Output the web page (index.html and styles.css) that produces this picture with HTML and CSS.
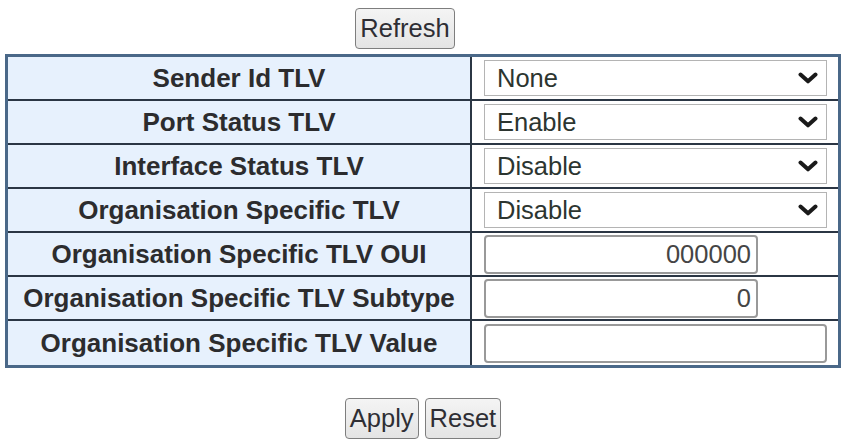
FILE: index.html
```html
<!DOCTYPE html>
<html>
<head>
<meta charset="utf-8">
<link rel="stylesheet" href="styles.css">
</head>
<body>
<div class="topbar">
  <button class="btn">Refresh</button>
</div>
<div class="grid">
  <div class="label">Sender Id TLV</div>
  <div class="value">
    <div class="selwrap">
      <select class="sel"><option>None</option></select>
      <svg class="chev" viewBox="0 0 20 12" width="20" height="12"><polyline points="2.5,2.5 10,9.3 17.5,2.5" fill="none" stroke="#1a1a1a" stroke-width="4" stroke-linecap="round" stroke-linejoin="round"/></svg>
    </div>
  </div>
  <div class="label">Port Status TLV</div>
  <div class="value">
    <div class="selwrap">
      <select class="sel"><option>Enable</option></select>
      <svg class="chev" viewBox="0 0 20 12" width="20" height="12"><polyline points="2.5,2.5 10,9.3 17.5,2.5" fill="none" stroke="#1a1a1a" stroke-width="4" stroke-linecap="round" stroke-linejoin="round"/></svg>
    </div>
  </div>
  <div class="label">Interface Status TLV</div>
  <div class="value">
    <div class="selwrap">
      <select class="sel"><option>Disable</option></select>
      <svg class="chev" viewBox="0 0 20 12" width="20" height="12"><polyline points="2.5,2.5 10,9.3 17.5,2.5" fill="none" stroke="#1a1a1a" stroke-width="4" stroke-linecap="round" stroke-linejoin="round"/></svg>
    </div>
  </div>
  <div class="label">Organisation Specific TLV</div>
  <div class="value">
    <div class="selwrap">
      <select class="sel"><option>Disable</option></select>
      <svg class="chev" viewBox="0 0 20 12" width="20" height="12"><polyline points="2.5,2.5 10,9.3 17.5,2.5" fill="none" stroke="#1a1a1a" stroke-width="4" stroke-linecap="round" stroke-linejoin="round"/></svg>
    </div>
  </div>
  <div class="label">Organisation Specific TLV OUI</div>
  <div class="value"><input class="txt short" type="text" value="000000"></div>
  <div class="label">Organisation Specific TLV Subtype</div>
  <div class="value"><input class="txt short" type="text" value="0"></div>
  <div class="label last">Organisation Specific TLV Value</div>
  <div class="value last"><input class="txt long" type="text" value=""></div>
</div>
<div class="actions">
  <button class="btn">Apply</button>
  <button class="btn">Reset</button>
</div>
</body>
</html>
```

FILE: styles.css
```css
* { box-sizing: border-box; }
html, body { margin: 0; padding: 0; background: #ffffff; }
body {
  font-family: "Liberation Sans", Arial, sans-serif;
  color: #333333;
  width: 846px;
  height: 445px;
  overflow: hidden;
}
.topbar {
  display: flex;
  justify-content: center;
  padding-top: 8px;
  padding-right: 36px;
  height: 54px;
}
.btn {
  font-family: "Liberation Sans", Arial, sans-serif;
  font-size: 25.5px;
  color: #2e2e34;
  background: linear-gradient(#f4f4f4, #e4e4e4);
  border: 1.5px solid #7e7e7e;
  border-radius: 4px;
  height: 41px;
  padding: 0 4px;
  margin: 0;
  line-height: 1;
}
.grid {
  margin-left: 5px;
  width: 836px;
  border: 3px solid #4a6888;
  display: grid;
  grid-template-columns: 464px 366px;
}
.label {
  height: 44px;
  background: #e7f1fd;
  border-right: 2px solid #2b3644;
  border-bottom: 2px solid #2b3644;
  display: flex;
  align-items: center;
  justify-content: center;
  font-weight: bold;
  font-size: 26px;
  color: #2c2c2e;
  white-space: nowrap;
}
.value {
  height: 44px;
  border-bottom: 2px solid #2b3644;
  display: flex;
  align-items: center;
  padding-left: 12px;
  background: #ffffff;
}
.label.last, .value.last { border-bottom: none; }
.selwrap {
  position: relative;
  width: 343px;
  height: 36px;
}
.sel {
  appearance: none;
  -webkit-appearance: none;
  width: 343px;
  height: 36px;
  border: 1.5px solid #b4b4b4;
  border-radius: 0;
  background: #ffffff;
  font-family: "Liberation Sans", Arial, sans-serif;
  font-size: 25.5px;
  color: #2c3530;
  padding: 0 0 0 12px;
  margin: 0;
}
.chev {
  position: absolute;
  right: 9px;
  top: 12px;
  pointer-events: none;
}
.txt {
  height: 39px;
  border: 2px solid #999999;
  border-radius: 4px;
  background: #ffffff;
  font-family: "Liberation Sans", Arial, sans-serif;
  font-size: 25.5px;
  color: #454545;
  padding: 0 5px;
  margin: 0;
  text-align: right;
}
.txt.short { width: 274px; }
.txt.long { width: 343px; }
.actions {
  display: flex;
  justify-content: center;
  gap: 6px;
  margin-top: 30px;
}
```
